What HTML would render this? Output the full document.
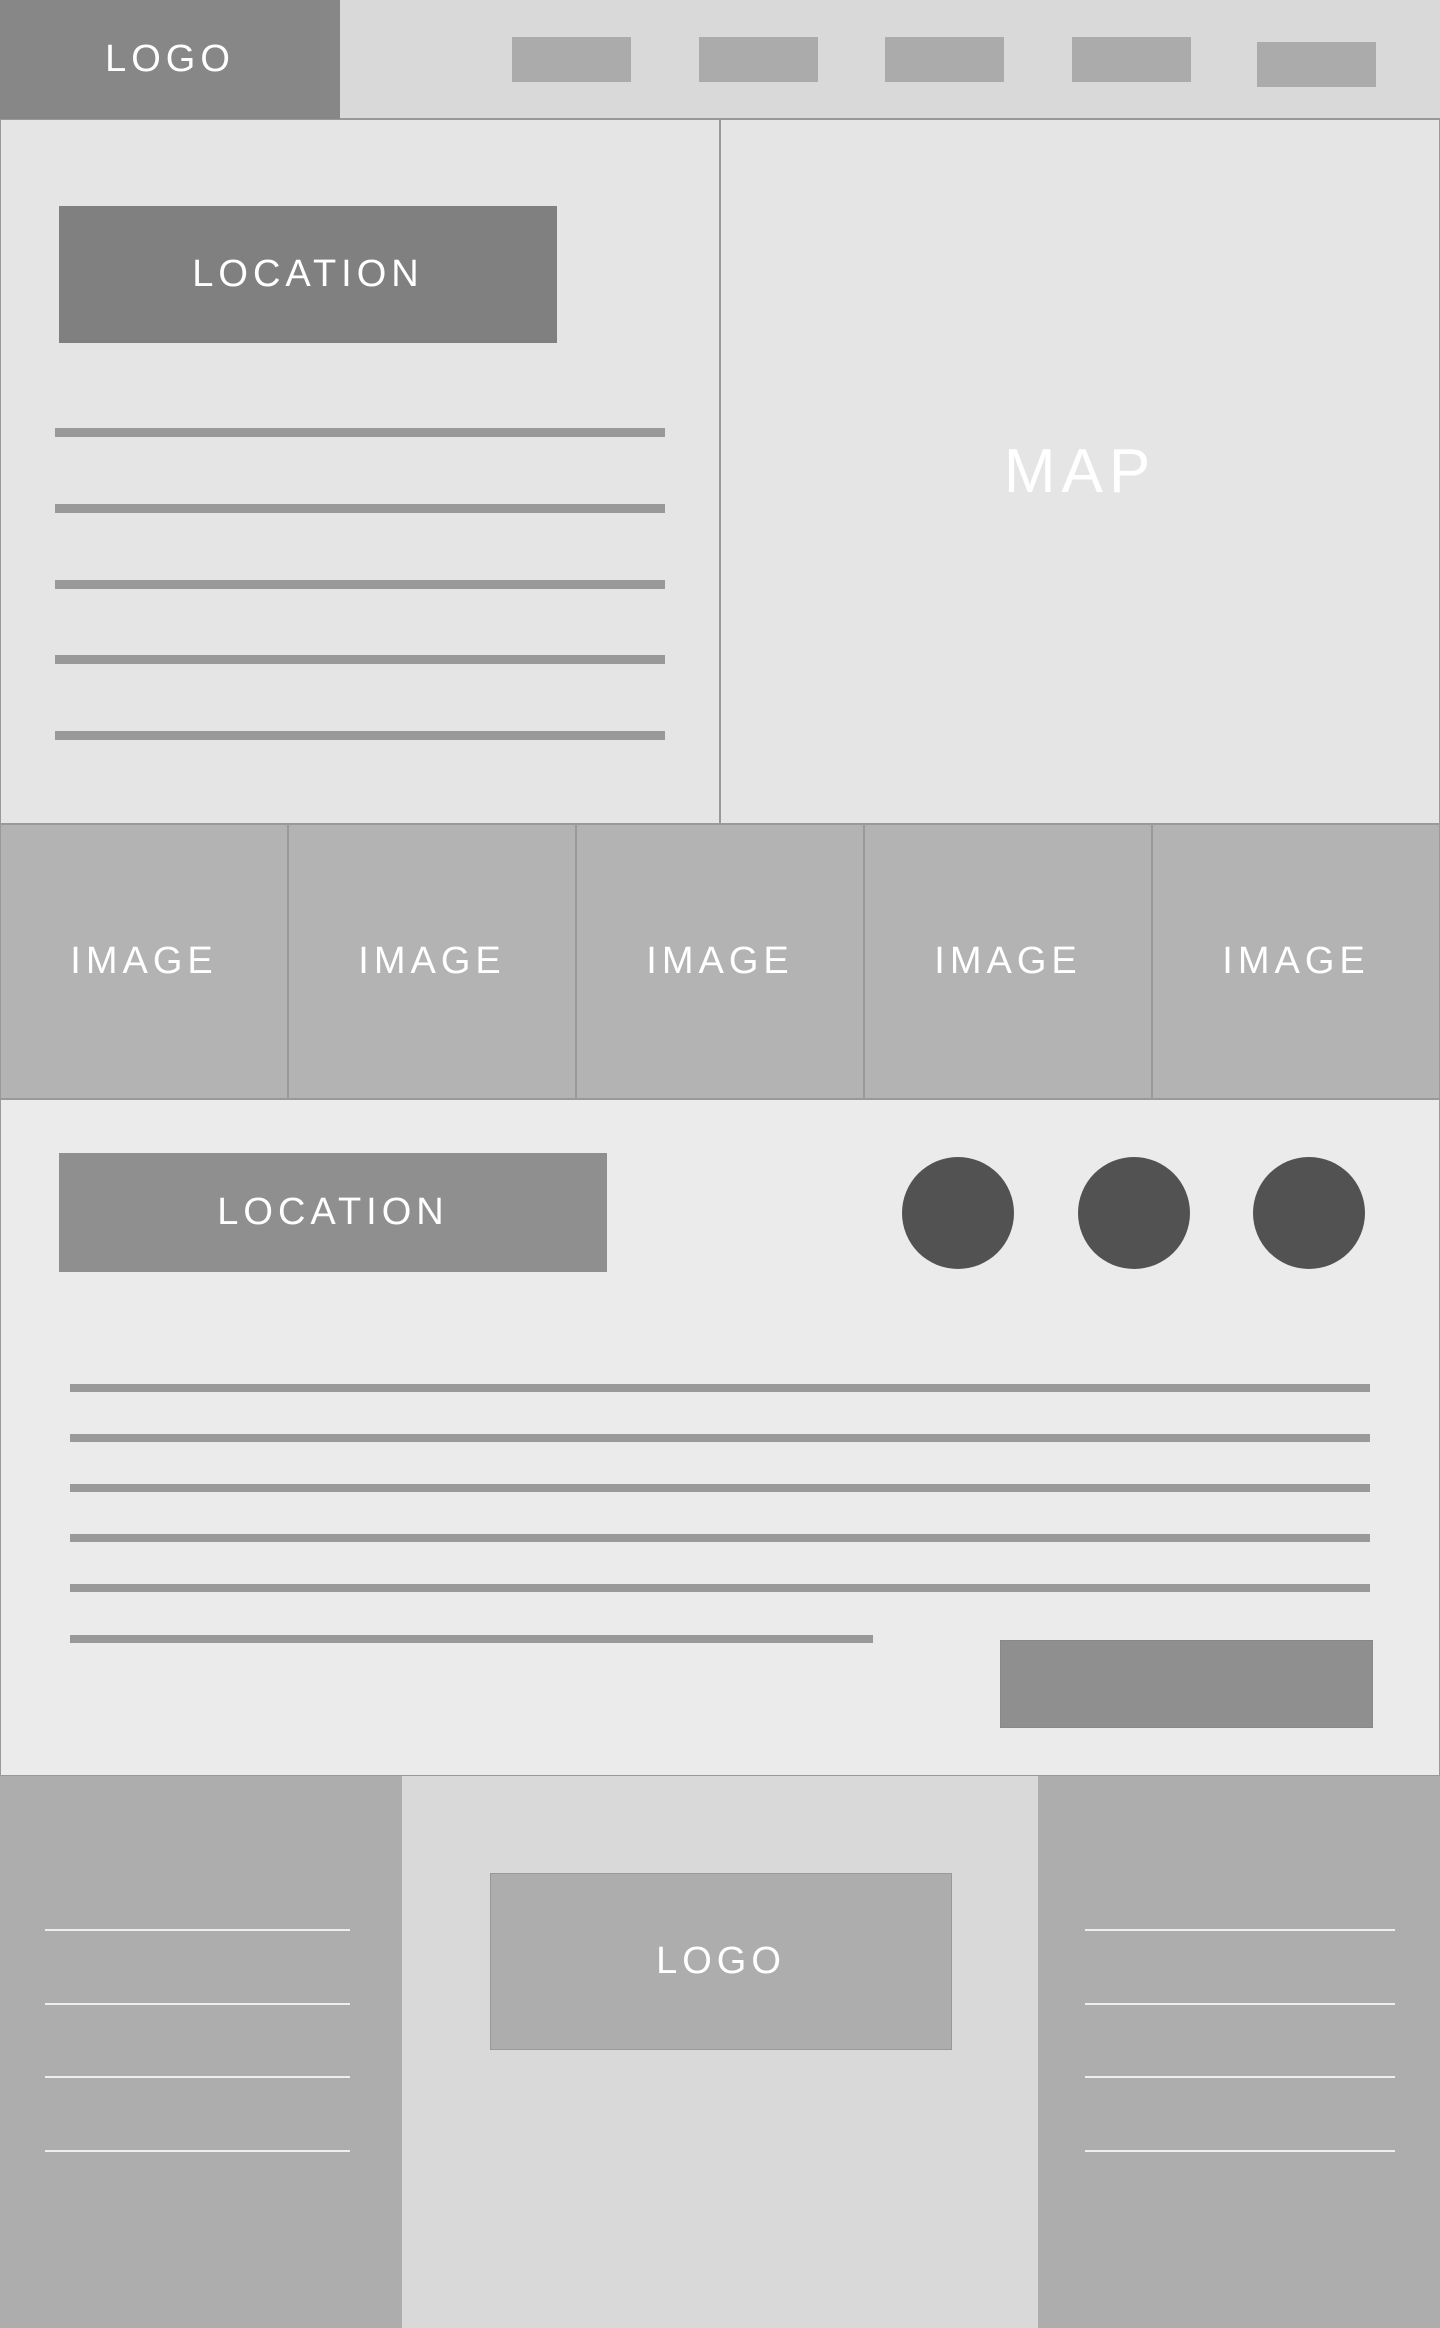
<!DOCTYPE html>
<html><head><meta charset="utf-8"><style>
*{margin:0;padding:0;box-sizing:border-box}
body{width:1440px;height:2328px;position:relative;background:#d9d9d9;font-family:"Liberation Sans",sans-serif;overflow:hidden}
.a{position:absolute}
.t{display:flex;align-items:center;justify-content:center;color:#fff;letter-spacing:5px}
.nav{background:#ababab;width:119px;height:45px}
.l1{background:#999;height:9px;left:55px;width:610px}
.l2{background:#999;height:8px;left:70px;width:1300px}
.fl{background:#eee;height:2px}
.img{top:824px;width:288px;height:275px;background:#b3b3b3;border:1px solid #999;font-size:38px}
.c{width:112px;height:112px;border-radius:50%;background:#525252;top:1157px}
</style></head><body>
<div class="a" style="left:0;top:0;width:1440px;height:119px;background:#d9d9d9;border-bottom:1px solid #999"></div>
<div class="a t" style="left:0;top:0;width:340px;height:119px;background:#878787;font-size:38px">LOGO</div>
<div class="a nav" style="left:512px;top:37px"></div>
<div class="a nav" style="left:699px;top:37px"></div>
<div class="a nav" style="left:885px;top:37px"></div>
<div class="a nav" style="left:1072px;top:37px"></div>
<div class="a nav" style="left:1257px;top:42px"></div>

<div class="a" style="left:0;top:119px;width:720px;height:705px;background:#e5e5e5;border:1px solid #999"></div>
<div class="a t" style="left:720px;top:119px;width:720px;height:705px;background:#e5e5e5;border:1px solid #999;font-size:62px;letter-spacing:6px">MAP</div>
<div class="a t" style="left:59px;top:206px;width:498px;height:137px;background:#808080;font-size:38px">LOCATION</div>
<div class="a l1" style="top:428px"></div>
<div class="a l1" style="top:504px"></div>
<div class="a l1" style="top:580px"></div>
<div class="a l1" style="top:655px"></div>
<div class="a l1" style="top:731px"></div>

<div class="a t img" style="left:0">IMAGE</div>
<div class="a t img" style="left:288px">IMAGE</div>
<div class="a t img" style="left:576px">IMAGE</div>
<div class="a t img" style="left:864px">IMAGE</div>
<div class="a t img" style="left:1152px">IMAGE</div>

<div class="a" style="left:0;top:1099px;width:1440px;height:677px;background:#ebebeb;border:1px solid #999"></div>
<div class="a t" style="left:59px;top:1153px;width:548px;height:119px;background:#8f8f8f;font-size:38px">LOCATION</div>
<div class="a c" style="left:902px"></div>
<div class="a c" style="left:1078px"></div>
<div class="a c" style="left:1253px"></div>
<div class="a l2" style="top:1384px"></div>
<div class="a l2" style="top:1434px"></div>
<div class="a l2" style="top:1484px"></div>
<div class="a l2" style="top:1534px"></div>
<div class="a l2" style="top:1584px"></div>
<div class="a l2" style="top:1635px;width:803px"></div>
<div class="a" style="left:1000px;top:1640px;width:373px;height:88px;background:#8f8f8f;border:1px solid #888"></div>

<div class="a" style="left:0;top:1776px;width:402px;height:552px;background:#adadad"></div>
<div class="a" style="left:1038px;top:1776px;width:402px;height:552px;background:#adadad"></div>
<div class="a t" style="left:490px;top:1873px;width:462px;height:177px;background:#adadad;border:1px solid #999;font-size:38px">LOGO</div>
<div class="a fl" style="left:45px;width:305px;top:1929px"></div>
<div class="a fl" style="left:45px;width:305px;top:2003px"></div>
<div class="a fl" style="left:45px;width:305px;top:2076px"></div>
<div class="a fl" style="left:45px;width:305px;top:2150px"></div>
<div class="a fl" style="left:1085px;width:310px;top:1929px"></div>
<div class="a fl" style="left:1085px;width:310px;top:2003px"></div>
<div class="a fl" style="left:1085px;width:310px;top:2076px"></div>
<div class="a fl" style="left:1085px;width:310px;top:2150px"></div>
</body></html>
